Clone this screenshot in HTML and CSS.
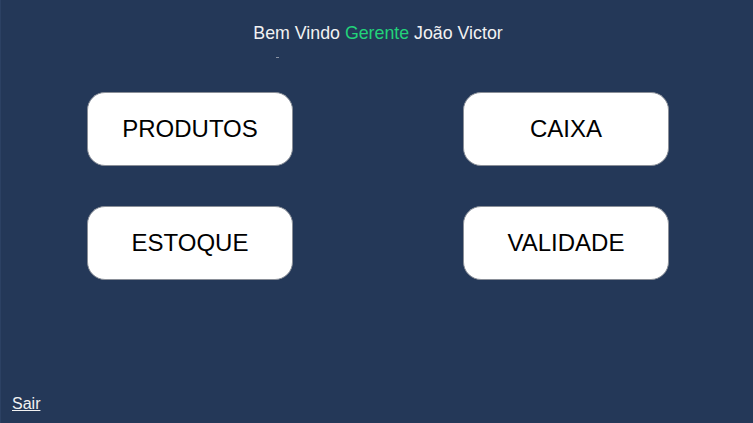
FILE: index.html
```html
<!DOCTYPE html>
<html lang="pt-BR">
<head>
<meta charset="utf-8">
<link rel="stylesheet" href="styles.css">
</head>
<body>
<div class="page">
  <header class="welcome">Bem Vindo <span class="role">Gerente</span> João Victor</header>
  <div class="mark"></div>
  <main class="menu">
    <a class="tile" href="#">PRODUTOS</a>
    <a class="tile" href="#">CAIXA</a>
    <a class="tile" href="#">ESTOQUE</a>
    <a class="tile" href="#">VALIDADE</a>
  </main>
  <footer class="footer"><a class="logout" href="#">Sair</a></footer>
</div>
</body>
</html>
```
FILE: styles.css
```css
html, body {
  margin: 0;
  padding: 0;
  height: 100%;
}
body {
  background: #243858;
  font-family: "Liberation Sans", Arial, sans-serif;
  color: #fff;
}
.page {
  height: 423px;
  display: flex;
  flex-direction: column;
  border-left: 1px solid #2c4163;
  box-sizing: border-box;
}
.welcome {
  text-align: center;
  font-size: 17.8px;
  padding-top: 23px;
  padding-left: 2px;
  line-height: 20px;
  color: #f2f2f2;
}
.role {
  color: #22d37a;
}
.mark {
  width: 3px;
  height: 1px;
  background: #8a93a3;
  margin: 14px 0 0 275px;
}
.menu {
  display: grid;
  grid-template-columns: 206px 206px;
  grid-auto-rows: 74px;
  column-gap: 170px;
  row-gap: 40px;
  margin: 34px 0 0 86px;
}
.tile {
  display: flex;
  align-items: center;
  justify-content: center;
  background: #fff;
  border: 1px solid #8a8f98;
  border-radius: 18px;
  box-sizing: border-box;
  color: #000;
  font-size: 24px;
  text-decoration: none;
}
.footer {
  margin-top: auto;
  padding: 0 0 10px 11px;
}
.logout {
  color: #f2f2f2;
  font-size: 16px;
  text-decoration: underline;
}
```
